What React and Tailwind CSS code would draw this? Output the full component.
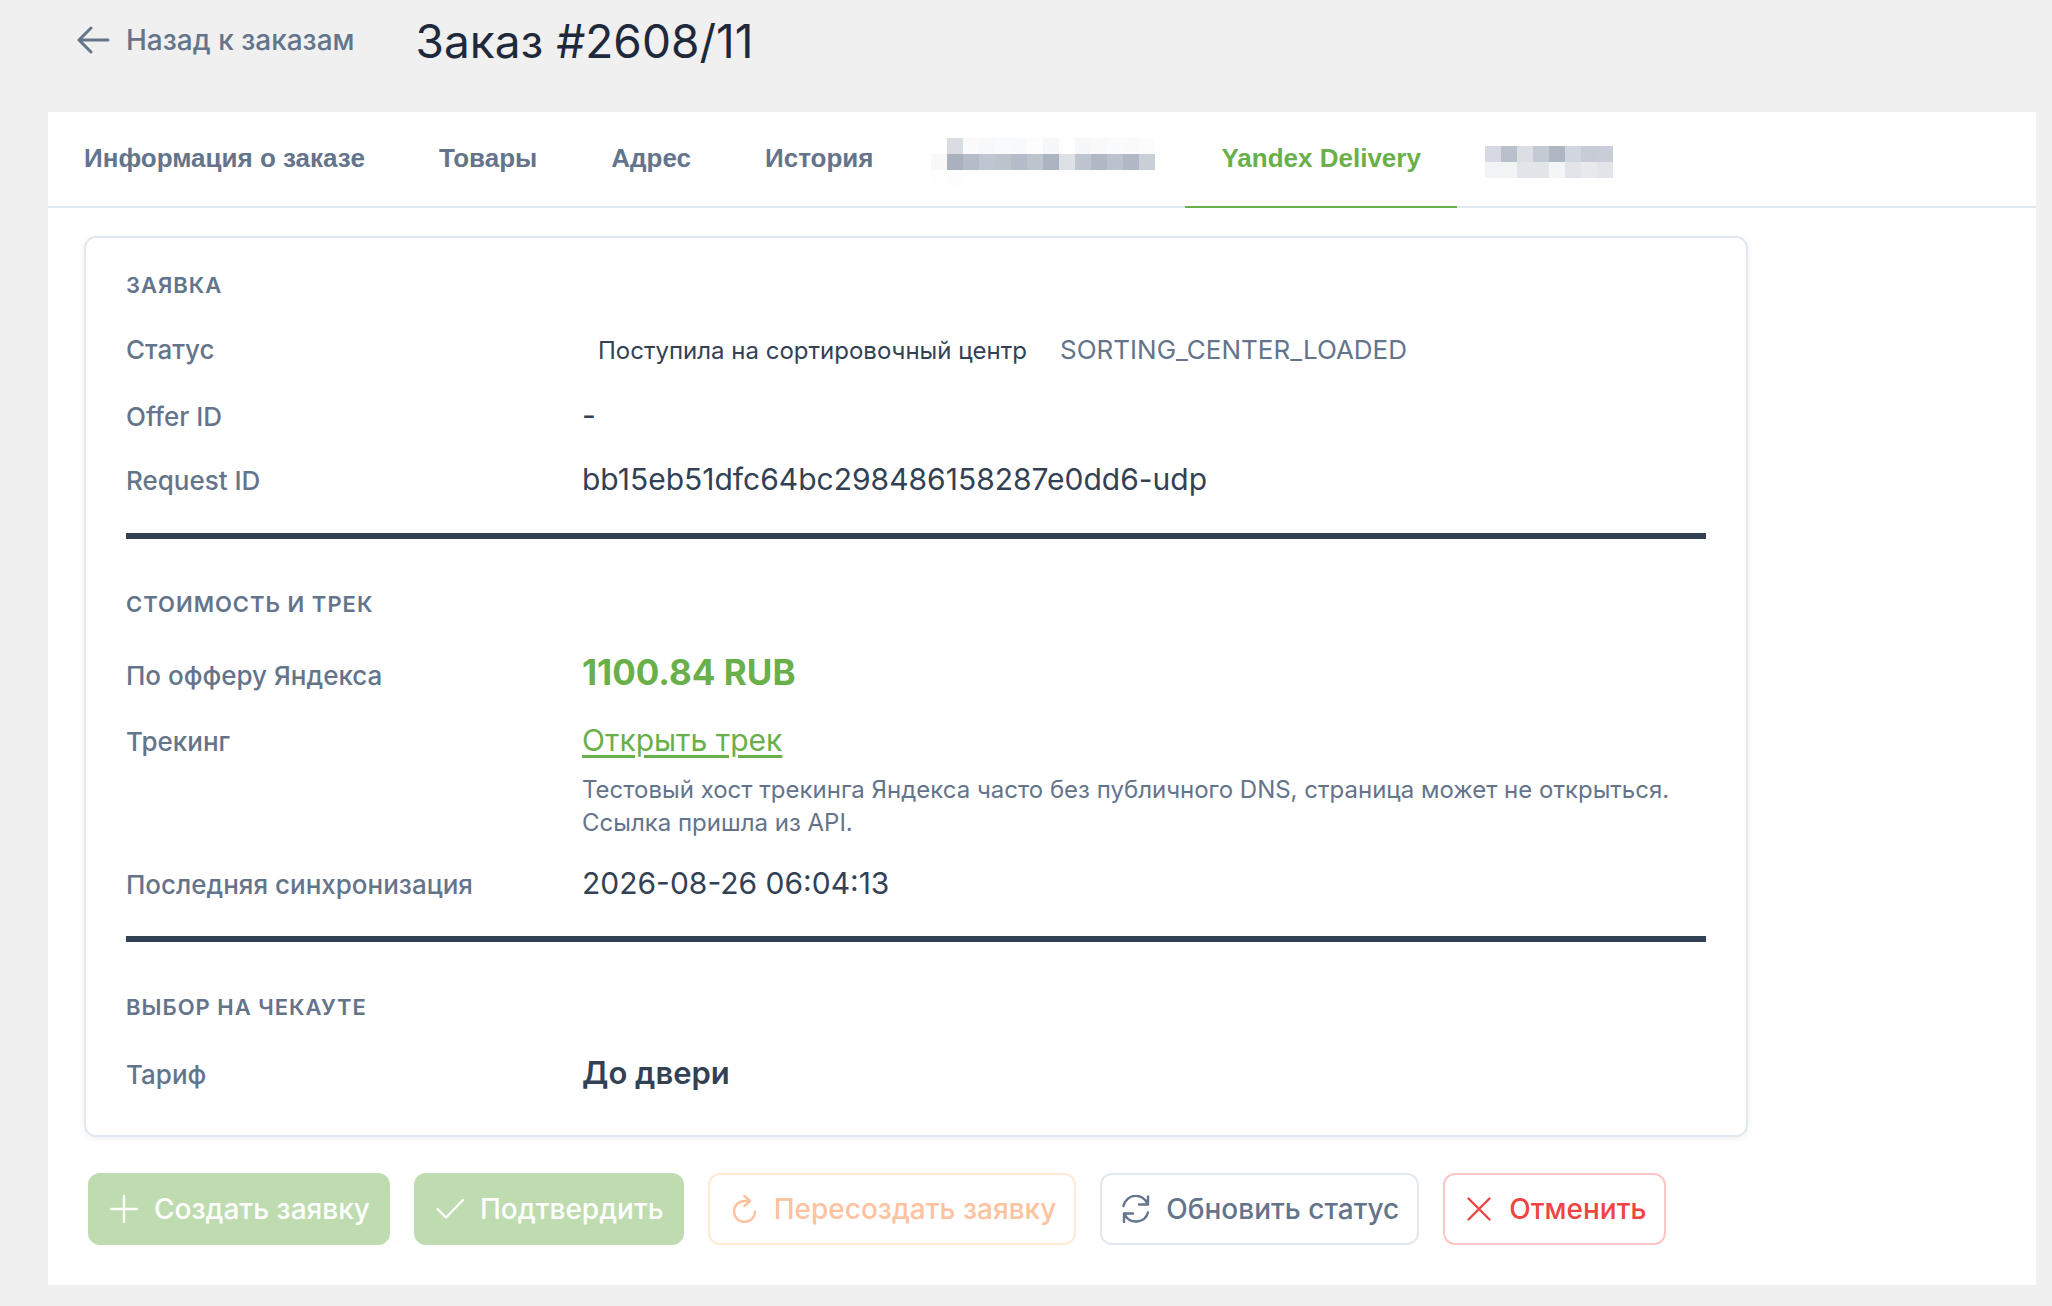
import React from "react";

const mosaicA = [
  ["#ffffff", "#d9dce1", "#fafafa", "#f6f8fa", "#f8fafb", "#f7f9fb", "#fdfdfd", "#f6f7f9", "#fefefe", "#f5f7f9", "#f9f9fa", "#fafbfd", "#fafafa", "#fcfcfc"],
  ["#f8f8f8", "#a9b1bf", "#b6bbc8", "#c0c6d1", "#bcc3cd", "#b5bbc8", "#bdc4ce", "#acb4c0", "#dde0e5", "#bfc5d0", "#b1b7c5", "#bcc2cd", "#b1b7c4", "#cbcfd6"],
  ["#fefefe", "#fdfdfd", "#fefefe", "#ffffff", "#ffffff", "#ffffff", "#ffffff", "#ffffff", "#ffffff", "#ffffff", "#ffffff", "#ffffff", "#ffffff", "#ffffff"],
];
const mosaicB = [
  ["#d6d9e1", "#b9c0cb", "#dbdee2", "#c4cad3", "#aeb6c2", "#d1d5de", "#c8ccd6", "#c9cdd7"],
  ["#f2f3f5", "#f2f3f5", "#e2e5ea", "#e2e6e9", "#f4f5f7", "#e3e4ea", "#e8e9ed", "#e2e6ea"],
];

function Mosaic({ rows }) {
  return (
    <span className="block">
      {rows.map((row, i) => (
        <span key={i} className="flex">
          {row.map((c, j) => (
            <span key={j} className="h-4 w-4" style={{ backgroundColor: c }} />
          ))}
        </span>
      ))}
    </span>
  );
}

const tabBase = "-mb-0.5 flex h-24 items-center border-b-2";

function Tab({ children, active }) {
  return (
    <button
      type="button"
      role="tab"
      aria-selected={!!active}
      className={`${tabBase} px-9 pb-0.5 ${active ? "border-[#6ab04a] text-[#6ab04a]" : "border-transparent text-[#64748b]"}`}
    >
      {children}
    </button>
  );
}

function HiddenTab({ rows, label, className }) {
  return (
    <button type="button" role="tab" aria-selected={false} aria-label={label} className={`${tabBase} border-transparent pt-1.5 ${className}`}>
      <Mosaic rows={rows} />
    </button>
  );
}

function Heading({ children, className }) {
  return (
    <h2 className={`text-[22px] leading-7 font-semibold tracking-[1px] text-[#64748b] uppercase ${className || ""}`}>{children}</h2>
  );
}

function Row({ label, children, className }) {
  return (
    <div className={`grid grid-cols-[456px_1fr] items-baseline ${className || ""}`}>
      <dt className="text-[26px] leading-8 font-medium text-[#64748b]">{label}</dt>
      <dd className="text-[30px] leading-9 text-[#334155]">{children}</dd>
    </div>
  );
}

function Icon({ children }) {
  return (
    <svg viewBox="0 0 28 28" className="size-7 shrink-0" fill="none" stroke="currentColor" strokeWidth="2.4" strokeLinecap="round" strokeLinejoin="round" aria-hidden="true">
      {children}
    </svg>
  );
}

const btn = "flex h-18 items-center gap-4 rounded-xl border-2 pr-[18px] pl-5 text-[28px] font-medium";

export default function App() {
  return (
    <div className="min-h-screen bg-[#f0f0f0] pr-4 pb-5 pl-12 font-['Inter','Noto_Sans',sans-serif]">
      <header className="flex h-28 items-start">
        <a href="#orders" className="mt-5 ml-7 flex items-center gap-4 text-[28px] leading-10 font-medium text-[#64748b]">
          <svg viewBox="0 0 34 28" className="h-7 w-[34px]" fill="none" stroke="currentColor" strokeWidth="3" strokeLinecap="round" strokeLinejoin="round" aria-hidden="true">
            <path d="M32 14H3M15 2 3 14l12 12" />
          </svg>
          Назад к заказам
        </a>
        <h1 className="mt-3 ml-[61px] text-[46px] leading-[58px] text-[#1e293b]">Заказ #2608/11</h1>
      </header>
      <main className="bg-white pb-10">
        <div role="tablist" className="flex gap-0.5 border-b-2 border-[#e2e8f0] font-['Liberation_Sans',sans-serif] text-[26px] font-bold">
          <Tab>Информация о заказе</Tab>
          <Tab>Товары</Tab>
          <Tab>Адрес</Tab>
          <Tab>История</Tab>
          <HiddenTab rows={mosaicA} label="Скрытая вкладка 1" className="pr-7 pl-5" />
          <Tab active>Yandex Delivery</Tab>
          <HiddenTab rows={mosaicB} label="Скрытая вкладка 2" className="px-[26px]" />
        </div>
        <section className="mt-7 ml-9 max-w-[1664px] rounded-xl border-2 border-[#e2e8f0] px-10 pt-[33px] pb-11 shadow-[0_2px_6px_rgba(0,0,0,0.06)]">
          <Heading>Заявка</Heading>
          <dl>
            <Row label="Статус" className="mt-[33px]">
              <span className="flex items-baseline gap-[33px] pl-4">
                <span className="text-[24px]">Поступила на сортировочный центр</span>
                <span className="text-[26px] text-[#64748b]">SORTING_CENTER_LOADED</span>
              </span>
            </Row>
            <Row label="Offer ID" className="mt-7">-</Row>
            <Row label="Request ID" className="mt-7">bb15eb51dfc64bc298486158287e0dd6-udp</Row>
          </dl>
          <hr className="mt-9 border-t-[6px] border-[#334155]" />
          <Heading className="mt-[51px]">Стоимость и трек</Heading>
          <dl>
            <Row label="По офферу Яндекса" className="mt-9">
              <span className="text-[35px] font-bold text-[#6ab04a]">1100.84 RUB</span>
            </Row>
            <Row label="Трекинг" className="mt-[30px]">
              <a href="#track" className="text-[#6ab04a] underline decoration-[3px] underline-offset-4">Открыть трек</a>
              <p className="mt-[15px] text-[24px] leading-[33px] text-[#64748b]">
                Тестовый хост трекинга Яндекса часто без публичного DNS, страница может не открыться. Ссылка пришла из API.
              </p>
            </Row>
            <Row label="Последняя синхронизация" className="mt-[26px]">2026-08-26 06:04:13</Row>
          </dl>
          <hr className="mt-[35px] border-t-[6px] border-[#334155]" />
          <Heading className="mt-[51px]">Выбор на чекауте</Heading>
          <dl>
            <Row label="Тариф" className="mt-[34px]">
              <span className="text-[31px] font-semibold">До двери</span>
            </Row>
          </dl>
        </section>
        <div className="mt-9 ml-10 flex flex-wrap gap-6">
          <button type="button" disabled className={`${btn} border-[#bfdcb0] bg-[#bfdcb0] text-white`}>
            <Icon><path d="M14 1v26M1 14h26" /></Icon>
            Создать заявку
          </button>
          <button type="button" disabled className={`${btn} border-[#bfdcb0] bg-[#bfdcb0] text-white`}>
            <Icon><path d="M1.5 14l8.5 8.5L27 5" /></Icon>
            Подтвердить
          </button>
          <button type="button" disabled className={`${btn} border-[#ffead5] text-[#fdc2a0]`}>
            <Icon><path d="M25 16.5a10.5 10.5 0 1 1-10.5-10.5h5M14.5 1l5.5 5-5.5 5" /></Icon>
            Пересоздать заявку
          </button>
          <button type="button" className={`${btn} border-[#e2e8f0] text-[#64748b]`}>
            <Icon><path d="M26 1.5v8h-9M2 27v-8.5h9M1.5 11A12.5 12.5 0 0 1 25.5 9M26 17.5A12.5 12.5 0 0 1 3 20" /></Icon>
            Обновить статус
          </button>
          <button type="button" className={`${btn} border-[#fec5c5] text-[#ef4444]`}>
            <Icon><path d="M3.5 3.5l21 21M24.5 3.5l-21 21" /></Icon>
            Отменить
          </button>
        </div>
      </main>
    </div>
  );
}
